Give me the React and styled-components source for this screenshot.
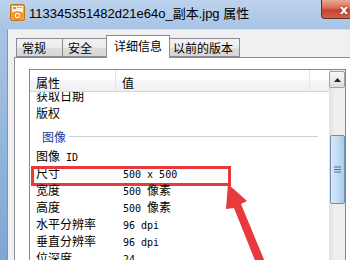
import React from "react";
import styled, { createGlobalStyle } from "styled-components";

const GlobalStyle = createGlobalStyle`
  html, body {
    margin: 0;
    padding: 0;
    width: 350px;
    height: 260px;
    overflow: hidden;
    background: #f0f0f0;
  }
  body {
    font-family: "Noto Sans CJK SC", "Noto Sans", sans-serif;
  }
`;

const Window = styled.div`
  position: relative;
  width: 350px;
  height: 260px;
  display: flex;
  flex-direction: column;
  overflow: hidden;
  background: linear-gradient(180deg, #bdd3ec 0%, #a8c4e4 28px, #7fa6d3 100%);
`;

const TitleBar = styled.div`
  height: 29px;
  flex-shrink: 0;
  display: flex;
  align-items: flex-start;
  padding-left: 10px;
`;

const TitleIcon = styled.svg`
  width: 15px;
  height: 17px;
  margin-top: 4px;
  flex-shrink: 0;
`;

const TitleText = styled.div`
  margin: 5px 0 0 4px;
  font-family: "Liberation Sans", "Noto Sans CJK SC", sans-serif;
  font-size: 13px;
  line-height: 17px;
  color: #000;
  white-space: nowrap;
`;

const CloseButton = styled.div`
  margin-left: auto;
  margin-right: -17px;
  width: 44px;
  height: 18px;
  flex-shrink: 0;
  display: flex;
  align-items: center;
  justify-content: center;
  border: 1px solid #5a3330;
  border-top: none;
  border-radius: 0 0 4px 4px;
  background: linear-gradient(180deg, #e9a895 0%, #d86b55 45%, #c7432c 55%, #d0624a 100%);
  color: #fff;
  font-family: "DejaVu Sans", sans-serif;
  font-size: 13px;
  font-weight: bold;
  text-shadow: 0 0 2px #5a1a10;
`;

const Body = styled.div`
  flex: 1;
  margin-left: 7px;
  border-left: 1px solid #8094ad;
  border-top: 1px solid #d6e2ef;
  background: #f0f0f0;
  padding-left: 6px;
  display: flex;
  flex-direction: column;
`;

const TabStrip = styled.div`
  height: 27px;
  padding-left: 2px;
  display: flex;
  align-items: flex-end;
`;

const Tab = styled.div`
  box-sizing: border-box;
  min-width: 47px;
  height: ${(p) => (p.$active ? "23px" : "19px")};
  margin: ${(p) => (p.$active ? "0 -2px -1px -3px" : "0 0 0 -1px")};
  padding: ${(p) => (p.$active ? "2px 7px 0 7px" : "1px 6px 0 5px")};
  position: relative;
  z-index: ${(p) => (p.$active ? 2 : 1)};
  border: 1px solid #898c95;
  border-bottom: ${(p) => (p.$active ? "none" : "1px solid #898c95")};
  background: ${(p) =>
    p.$active
      ? "#fff"
      : "linear-gradient(180deg, #f3f3f3 0%, #ebebeb 50%, #dedede 50%, #d6d6d6 100%)"};
  font-size: 12px;
  line-height: 16px;
  color: #000;
  white-space: nowrap;

  &:first-child {
    margin-left: 0;
  }
`;

const Panel = styled.div`
  flex: 1;
  width: 360px;
  border: 1px solid #898c95;
  background: #fff;
  padding: 11px 0 0 14px;
`;

const ListView = styled.div`
  width: 315px;
  height: 300px;
  border: 1px solid #828790;
  display: flex;
  background: #fff;
`;

const ListContent = styled.div`
  flex: 1;
  display: flex;
  flex-direction: column;
  overflow: hidden;
`;

const Header = styled.div`
  position: relative;
  z-index: 1;
  height: 21px;
  flex-shrink: 0;
  display: flex;
  border-bottom: 1px solid #d5d5d5;
  background: linear-gradient(180deg, #ffffff 0%, #ffffff 45%, #f4f5f7 55%, #eff0f2 100%);
`;

const HeaderCell = styled.div`
  box-sizing: border-box;
  width: ${(p) => p.$width}px;
  flex: ${(p) => (p.$width ? "none" : 1)};
  padding: 5px 0 0 6px;
  border-right: ${(p) => (p.$width ? "1px solid #e3e5e8" : "none")};
  font-size: 12px;
  line-height: 15px;
  color: #000;
`;

const Rows = styled.div`
  margin-top: -5px;
  display: flex;
  flex-direction: column;
`;

const Row = styled.div`
  position: relative;
  height: 17px;
  display: flex;
  font-size: 12px;
  line-height: 17px;
  color: #000;
  white-space: nowrap;
`;

const Cell = styled.div`
  box-sizing: border-box;
  width: ${(p) => (p.$label ? "86px" : "auto")};
  padding-left: ${(p) => (p.$label ? "6px" : "7px")};
`;

const Latin = styled.span`
  font-family: "DejaVu Sans Mono", "Liberation Mono", monospace;
  font-size: 10px;
  white-space: pre;
`;

const HighlightBox = styled.div`
  position: absolute;
  left: 1px;
  top: 2px;
  width: 200px;
  height: 20px;
  box-sizing: border-box;
  border: 3px solid #e8393c;
`;

const Group = styled.div`
  height: 26px;
  box-sizing: border-box;
  padding: 7px 11px 2px 12px;
  display: flex;
  align-items: center;
  font-size: 12px;
  line-height: 17px;
  color: #1e3a9a;
`;

const GroupLine = styled.div`
  flex: 1;
  height: 1px;
  margin-left: 3px;
  background: #c8d0db;
`;

const Scrollbar = styled.div`
  width: 16px;
  flex-shrink: 0;
  display: flex;
  flex-direction: column;
  align-items: center;
  background: linear-gradient(90deg, #e2e2e2 0%, #efefef 40%, #ececec 100%);
`;

const ArrowButton = styled.div`
  box-sizing: border-box;
  width: 16px;
  height: 17px;
  margin-top: 1px;
  display: flex;
  align-items: center;
  justify-content: center;
  border: 1px solid #a2a2a2;
  border-radius: 2px;
  background: linear-gradient(180deg, #f7f7f7 0%, #ebebeb 50%, #dcdcdc 100%);
`;

const Thumb = styled.div`
  box-sizing: border-box;
  width: 15px;
  height: 69px;
  margin-top: 47px;
  display: flex;
  align-items: center;
  justify-content: center;
  border: 1px solid #6f8fae;
  border-radius: 2px;
  background: linear-gradient(90deg, #d8e8f7 0%, #c3dcf3 50%, #a9cbeb 100%);
`;

const Overlay = styled.svg`
  position: absolute;
  left: 0;
  top: 0;
  width: 350px;
  height: 260px;
  pointer-events: none;
`;

const rows = [
  { label: "获取日期", value: "" },
  { label: "版权", value: "" },
  { group: "图像" },
  { label: "图像 ID", value: "" },
  { label: "尺寸", value: "500 x 500", mark: true },
  { label: "宽度", value: "500 像素" },
  { label: "高度", value: "500 像素" },
  { label: "水平分辨率", value: "96 dpi" },
  { label: "垂直分辨率", value: "96 dpi" },
  { label: "位深度", value: "24" },
];

// ASCII parts use a narrow mono font, like the old SimSun list text
function Mixed({ text }) {
  const parts = text.match(/[\x00-\x7f]+|[^\x00-\x7f]+/g) || [];
  return parts.map((part, i) =>
    /^[\x00-\x7f]+$/.test(part) ? <Latin key={i}>{part}</Latin> : <span key={i}>{part}</span>
  );
}

function PhotoIcon() {
  return (
    <TitleIcon viewBox="0 0 15 17">
      <rect x="0.5" y="0.5" width="14" height="16" rx="1.5" fill="#f2a33a" stroke="#c97415" />
      <rect x="2" y="2" width="11" height="6" fill="#fbf3dc" />
      <rect x="3" y="3" width="3" height="2" fill="#9a9a9a" />
      <rect x="7" y="3" width="5" height="1" fill="#b5b5b5" />
      <circle cx="7.5" cy="11.5" r="3.6" fill="#fff3cf" stroke="#d9781a" strokeWidth="1.2" />
      <circle cx="7.5" cy="11.5" r="1.6" fill="#e88a20" />
    </TitleIcon>
  );
}

export default function App() {
  return (
    <>
      <GlobalStyle />
      <Window>
        <TitleBar>
          <PhotoIcon />
          <TitleText>113345351482d21e64o_副本.jpg 属性</TitleText>
          <CloseButton>x</CloseButton>
        </TitleBar>
        <Body>
          <TabStrip>
            <Tab>常规</Tab>
            <Tab>安全</Tab>
            <Tab $active>详细信息</Tab>
            <Tab>以前的版本</Tab>
          </TabStrip>
          <Panel>
            <ListView>
              <ListContent>
                <Header>
                  <HeaderCell $width={86}>属性</HeaderCell>
                  <HeaderCell $width={194}>值</HeaderCell>
                  <HeaderCell />
                </Header>
                <Rows>
                  {rows.map((r, i) =>
                    r.group ? (
                      <Group key={i}>
                        {r.group}
                        <GroupLine />
                      </Group>
                    ) : (
                      <Row key={i}>
                        <Cell $label>
                          <Mixed text={r.label} />
                        </Cell>
                        <Cell>
                          <Mixed text={r.value} />
                        </Cell>
                        {r.mark && <HighlightBox />}
                      </Row>
                    )
                  )}
                </Rows>
              </ListContent>
              <Scrollbar>
                <ArrowButton>
                  <svg width="7" height="4" viewBox="0 0 7 4">
                    <path d="M0 4 L3.5 0 L7 4 Z" fill="#222" />
                  </svg>
                </ArrowButton>
                <Thumb>
                  <svg width="7" height="7" viewBox="0 0 7 7">
                    <path d="M0 1h7M0 3.5h7M0 6h7" stroke="#4a6f94" strokeWidth="1" />
                  </svg>
                </Thumb>
              </Scrollbar>
            </ListView>
          </Panel>
        </Body>
        <Overlay viewBox="0 0 350 260">
          <polygon
            points="228,184 247,201 241,204 265,262 256,263 234,208 226,209"
            fill="#e8393c"
          />
        </Overlay>
      </Window>
    </>
  );
}
